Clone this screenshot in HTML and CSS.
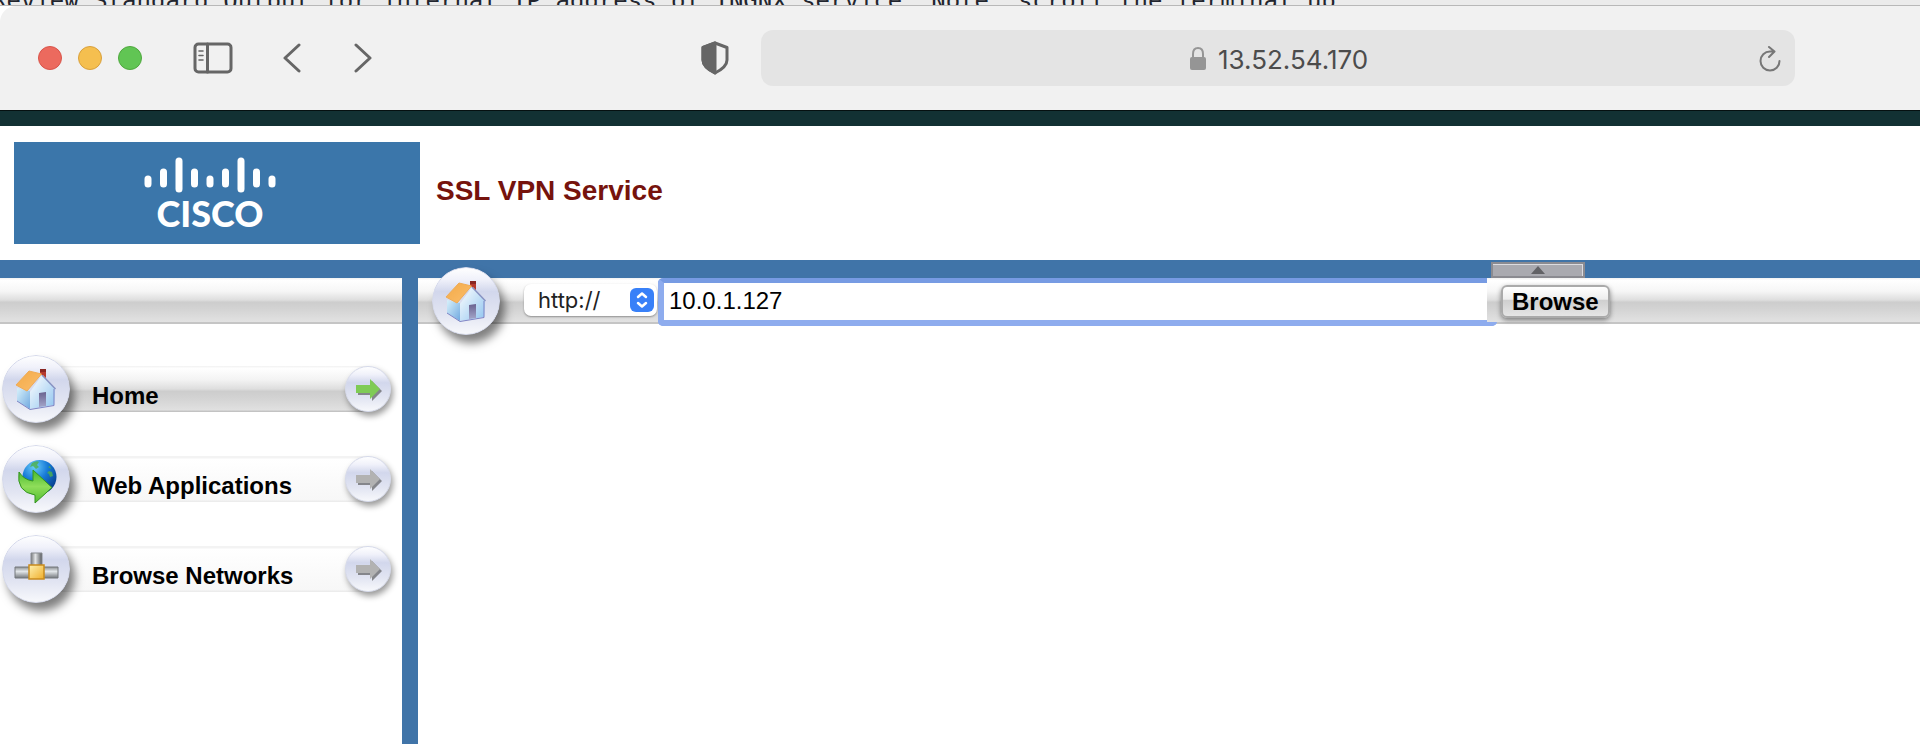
FILE: index.html
```html
<!DOCTYPE html>
<html lang="en">
<head>
<meta charset="utf-8">
<title>SSL VPN Service</title>
<link rel="stylesheet" href="styles.css">
</head>
<body>
<svg class="defs" aria-hidden="true">
  <defs>
    <linearGradient id="disc" x1="0" y1="0" x2="0" y2="1">
      <stop offset="0" stop-color="#fff"/><stop offset=".18" stop-color="#f0f1fa"/><stop offset=".36" stop-color="#d2d7ec"/><stop offset=".7" stop-color="#e2e5f2"/><stop offset="1" stop-color="#f8f9fc"/>
    </linearGradient>
    <linearGradient id="roof" x1="0" y1="0" x2="1" y2="1"><stop offset="0" stop-color="#f3aa48"/><stop offset="1" stop-color="#fbbe6c"/></linearGradient>
    <linearGradient id="side" x1="0" y1="0" x2="1" y2="1"><stop offset="0" stop-color="#d8f1fb"/><stop offset="1" stop-color="#70a9e0"/></linearGradient>
    <linearGradient id="wall" x1="0" y1="0" x2="1" y2="1"><stop offset="0" stop-color="#fff"/><stop offset="1" stop-color="#8fc4ef"/></linearGradient>
    <linearGradient id="door" x1="0" y1="0" x2="0" y2="1"><stop offset="0" stop-color="#6a6390"/><stop offset="1" stop-color="#a3a5c9"/></linearGradient>
    <radialGradient id="sea" cx=".35" cy=".2" r=".8"><stop offset="0" stop-color="#6bcdfa"/><stop offset=".5" stop-color="#1679d6"/><stop offset="1" stop-color="#07408f"/></radialGradient>
    <linearGradient id="leaf" x1="0" y1="0" x2="0" y2="1"><stop offset="0" stop-color="#46b82c"/><stop offset=".5" stop-color="#8fdd5a"/><stop offset="1" stop-color="#50bd30"/></linearGradient>
    <linearGradient id="pipe" x1="0" y1="0" x2="0" y2="1"><stop offset="0" stop-color="#8b8f93"/><stop offset=".4" stop-color="#e3e7ea"/><stop offset="1" stop-color="#74787d"/></linearGradient>
    <linearGradient id="pipev" x1="0" y1="0" x2="1" y2="0"><stop offset="0" stop-color="#77797c"/><stop offset=".4" stop-color="#e3e5e7"/><stop offset="1" stop-color="#55585c"/></linearGradient>
    <linearGradient id="hub" x1="0" y1="0" x2="1" y2="1"><stop offset="0" stop-color="#fff1b0"/><stop offset="1" stop-color="#efae2a"/></linearGradient>
    <symbol id="house" viewBox="0 0 68 68">
      <circle cx="34" cy="34" r="33.5" fill="url(#disc)" stroke="#d4d8ea"/>
      <path d="M15 33 28 36 28 54 15 46Z" fill="url(#side)"/>
      <path d="M28 37 40 20 53 34 52 50 28 54Z" fill="url(#wall)"/>
      <path d="M15 46 28 54.500 52 50.500 52 34" fill="none" stroke="#7d83c4"/>
      <path d="M40 20 53.500 34" stroke="#8792c2" stroke-width="1.500"/>
      <path d="M37 38 44 37 44 51 37 52Z" fill="url(#door)"/>
      <path d="M38 14h6v9l-3-3-3 0z" fill="#b5392e"/><path d="M38 14h6v3h-6z" fill="#8a2622"/>
      <path d="M14 30 27 16 39.500 19 25 36Z" fill="url(#roof)" stroke="#efab55"/>
    </symbol>
    <symbol id="globe" viewBox="0 0 68 68">
      <circle cx="34" cy="34" r="33.500" fill="url(#disc)" stroke="#d4d8ea"/>
      <circle cx="37.500" cy="32" r="17" fill="url(#sea)"/>
      <path d="M30 18q5-3 7-1l-2 3 2 2-3 2-3-3-3 1zM47 26l3 1 1 4-3 1-1-3-2-1zM46 22l2-1 1 3z" fill="#4fb04a" opacity=".8"/>
      <path d="M17 27Q22 35 31 36L31 25 50 42.500 33 58 33 50Q14 47 17 27Z" fill="url(#leaf)" stroke="#349420"/>
    </symbol>
    <symbol id="network" viewBox="0 0 68 68">
      <circle cx="34" cy="34" r="33.500" fill="url(#disc)" stroke="#d4d8ea"/>
      <path d="M29 18h11v14H29z" fill="url(#pipev)" stroke="#888b90"/>
      <path d="M13 32h43v11H13z" fill="url(#pipe)" stroke="#74787d"/>
      <path d="M27 30h15v14H27z" fill="url(#hub)" stroke="#c98b1d" stroke-width="1.500"/>
    </symbol>
    <symbol id="go" viewBox="0 0 46 46">
      <circle cx="23" cy="23" r="22.500" fill="url(#disc)" stroke="#d6daea"/>
      <path d="M13 21h14v-6l10 10-10 10v-6H13z" fill="#555" opacity=".65"/>
      <path d="M11 19h14v-6l10 10-10 10v-6H11z" fill="currentColor"/>
    </symbol>
  </defs>
</svg>

<div class="terminal">Review Standard Output for internal IP address of INGNX service. Note. scroll the terminal up</div>

<header class="chrome">
  <div class="lights"><span class="light red"></span><span class="light amber"></span><span class="light green"></span></div>
  <button class="tool sidebar-toggle" aria-label="Toggle sidebar"><svg width="40" height="32" viewBox="0 0 40 32"><rect x="2" y="2" width="36" height="28" rx="3.500"/><path d="M14.500 2v28"/><path d="M6 9h4M6 13.500h4M6 18h4" stroke-width="1.600"/></svg></button>
  <button class="tool back" aria-label="Back"><svg width="18" height="30" viewBox="0 0 18 30"><path d="M16 2 2 15 16 28"/></svg></button>
  <button class="tool forward" aria-label="Forward"><svg width="18" height="30" viewBox="0 0 18 30"><path d="M2 2 16 15 2 28"/></svg></button>
  <button class="tool shield" aria-label="Privacy report"><svg width="28" height="34" viewBox="0 0 28 34"><path d="M14 2 26 6.500V19Q26 26 14 32 2 26 2 19V6.500Z"/><path d="M14 2V32Q2 26 2 19V6.500Z" fill="#666"/></svg></button>
  <div class="address">
    <svg class="lock" width="16" height="24" viewBox="0 0 16 24"><rect y="10" width="16" height="13" rx="2" fill="#959595"/><path d="M3 11V7Q3 1 8 1T13 7V11" fill="none" stroke="#959595" stroke-width="2"/></svg>
    <span>13.52.54.170</span>
    <button class="tool reload" aria-label="Reload"><svg width="22" height="26" viewBox="0 0 22 26"><path d="M20.500 15A9.500 9.500 0 1 1 11 5.500H15M10 1 15.500 5.500 10 11"/></svg></button>
  </div>
</header>
<div class="page-edge"></div>

<div class="banner">
  <div class="logo">
    <svg width="134" height="38" viewBox="0 0 134 38" stroke="#fff" stroke-width="7" stroke-linecap="round"><path d="M5 24v5M20.500 17v12M36 6v28M51.500 17v12M67 24v5M82.500 17v12M98 6v28M113.500 17v12M129 24v5"/></svg>
    <span class="wordmark">CISCO</span>
  </div>
  <h1>SSL VPN Service</h1>
</div>

<div class="portal">
  <nav class="side">
    <div class="strip"></div>
    <ul class="menu">
      <li><a class="item active" href="#home"><svg class="disc"><use href="#house"/></svg><span>Home</span><svg class="go"><use href="#go"/></svg></a></li>
      <li><a class="item" href="#web"><svg class="disc"><use href="#globe"/></svg><span>Web Applications</span><svg class="go"><use href="#go"/></svg></a></li>
      <li><a class="item" href="#networks"><svg class="disc"><use href="#network"/></svg><span>Browse Networks</span><svg class="go"><use href="#go"/></svg></a></li>
    </ul>
  </nav>
  <main class="main">
    <form class="strip browse-bar">
      <a class="home-link" href="#home" aria-label="Home"><svg class="disc"><use href="#house"/></svg></a>
      <div class="scheme">
        <select aria-label="Protocol"><option>http://</option></select>
        <svg width="24" height="24" viewBox="0 0 24 24"><rect width="24" height="24" rx="6" fill="#3880f8"/><path d="M8 9 12 5.500 16 9M8 15 12 18.500 16 15" fill="none" stroke="#fff" stroke-width="2.500" stroke-linecap="round" stroke-linejoin="round"/></svg>
      </div>
      <input class="url" type="text" value="10.0.1.127" aria-label="Address">
      <div class="submit">
        <button class="collapse" type="button" aria-label="Collapse toolbar"><svg width="14" height="8" viewBox="0 0 14 8"><path d="M7 0 14 8H0Z" fill="#626266"/></svg></button>
        <button class="browse" type="button">Browse</button>
      </div>
    </form>
  </main>
</div>
</body>
</html>
```
FILE: styles.css
```css
* { box-sizing: border-box; }

body {
  display: flex;
  flex-direction: column;
  min-height: 100vh;
  margin: 0;
  overflow: hidden;
  background: #fff;
  color: #000;
  font: 24px "Liberation Sans", Arial, sans-serif;
}

button { margin: 0; padding: 0; border: 0; background: none; font: inherit; }

.defs { position: absolute; width: 0; height: 0; }

.terminal {
  display: flex;
  align-items: flex-end;
  height: 6px;
  margin-left: -8px;
  overflow: hidden;
  border-bottom: 1px solid #b8b8b8;
  background: #ebebeb;
  color: #22252e;
  font: 24px/8px "DejaVu Sans Mono", monospace;
  white-space: nowrap;
}

.chrome {
  display: flex;
  align-items: center;
  height: 104px;
  padding: 0 125px 0 38px;
  border-radius: 16px 0 0 0;
  background: #f1f1f1;
}

.lights { display: flex; gap: 16px; }
.light { width: 24px; height: 24px; border: 1px solid; border-radius: 50%; }
.red { border-color: #d9544a; background: #ec6a5e; }
.amber { border-color: #d9a03c; background: #f5bf4f; }
.green { border-color: #4fa83e; background: #61c554; }

.tool { display: flex; }
.tool svg { fill: none; stroke: #666; stroke-width: 3; stroke-linecap: round; stroke-linejoin: round; }
.sidebar-toggle { margin-left: 51px; }
.back { margin-left: 50px; }
.forward { margin-left: 53px; }
.shield { margin-left: 329px; }

.address {
  display: flex;
  flex: 1;
  align-items: center;
  gap: 12px;
  height: 56px;
  margin-left: 32px;
  padding: 2px 14px 0 429px;
  border-radius: 12px;
  background: #e4e4e4;
  color: #4c4c4c;
  font: 26px Inter, Roboto, sans-serif;
}
.reload { margin-left: auto; }
.reload svg { stroke: #777; stroke-width: 2; }

.page-edge { height: 16px; border-top: 1px solid #051010; background: #123133; }

.banner { display: flex; align-items: center; gap: 16px; padding: 16px 14px; }
.logo {
  display: flex;
  flex-direction: column;
  align-items: center;
  width: 406px;
  height: 102px;
  padding: 13px 14px 0 0;
  background: #3b76aa;
}
.wordmark { color: #fff; font: 900 36px/40px Lato, "Open Sans", sans-serif; }
h1 { margin: 0 0 4px; color: #76130d; font-size: 28px; }

.portal {
  display: flex;
  flex: 1;
  border-top: 18px solid #4074a8;
}
.side { flex: none; width: 418px; border-right: 16px solid #4074a8; }
.main { flex: 1; }

.strip {
  height: 46px;
  border-bottom: 2px solid #c5c5c5;
  background: linear-gradient(#f1f1f1, #fff 5%, #f6f6f6 30%, #dedede 50%, #cdcdcd 55%, #d3d3d3 70%, #e2e2e2);
}

.menu { display: flex; flex-direction: column; gap: 44px; margin: 0; padding: 42px 11px 0 2px; list-style: none; }
.item {
  display: flex;
  align-items: center;
  height: 46px;
  background: linear-gradient(#f3f3f3 2px, #fff 3px, #f7f7f7 44px, #ececec 45px) no-repeat 34px 0 / calc(100% - 57px) 100%;
  color: #000;
  font-weight: bold;
  text-decoration: none;
}
.item.active { background-image: linear-gradient(#f1f1f1, #fff 5%, #f3f3f3 30%, #dedede 50%, #cdcdcd 55%, #d3d3d3 70%, #e0e0e0 95%, #bbb); }
.item span { margin-left: 22px; padding-top: 14px; }
.disc {
  flex: none;
  width: 68px;
  height: 68px;
  border-radius: 50%;
  filter: drop-shadow(5px 8px 5px rgba(0, 0, 0, .5));
}
.go {
  width: 46px;
  height: 46px;
  margin-left: auto;
  color: #b2b2b2;
  filter: drop-shadow(2px 4px 3px rgba(0, 0, 0, .4));
}
.active .go { color: #7fcb55; }

.browse-bar { display: flex; align-items: center; padding-left: 14px; }
.home-link { display: flex; margin-right: 24px; padding-top: 2px; }
.scheme { position: relative; flex: none; width: 133px; height: 32px; }
.scheme select {
  width: 100%;
  height: 100%;
  padding: 0 0 0 14px;
  border: 0;
  border-radius: 7px;
  appearance: none;
  background: #fff;
  box-shadow: 0 1px 2px rgba(0, 0, 0, .35);
  color: #222;
  font: 22px Inter, Roboto, sans-serif;
}
.scheme svg { position: absolute; top: 4px; right: 3px; pointer-events: none; }

.url {
  flex: 0 1 839px;
  align-self: flex-start;
  width: 0;
  min-width: 0;
  height: 48px;
  margin-left: 1px;
  padding: 0 5px 2px;
  border: 6px solid #8eacee;
  border-top: 5px solid #779be3;
  border-radius: 5px;
  outline: 0;
  background: #fff;
  color: #000;
  font: 24px "Liberation Sans", Arial, sans-serif;
}

.submit {
  position: relative;
  display: flex;
  flex: 1;
  align-items: center;
  align-self: stretch;
  margin-left: -10px;
  padding: 2px 0 0 14px;
  background: linear-gradient(#f1f1f1, #fff 5%, #f6f6f6 30%, #dedede 50%, #cdcdcd 55%, #d3d3d3 70%, #e2e2e2);
}
.browse {
  height: 33px;
  padding: 0 9px;
  border: 2px solid #aaa;
  border-radius: 6px;
  background: linear-gradient(#fff, #eee 42%, #cfcfcf 46%, #e5e5e5);
  box-shadow: 0 2px 5px rgba(0, 0, 0, .45);
  font-weight: bold;
  line-height: 29px;
}
.collapse {
  position: absolute;
  top: -16px;
  left: 4px;
  display: grid;
  place-items: center;
  width: 94px;
  height: 16px;
  border: 2px solid #8b8b91;
  background: #aaaab0;
  box-shadow: inset -1px 1px #dcdce0;
}
```
